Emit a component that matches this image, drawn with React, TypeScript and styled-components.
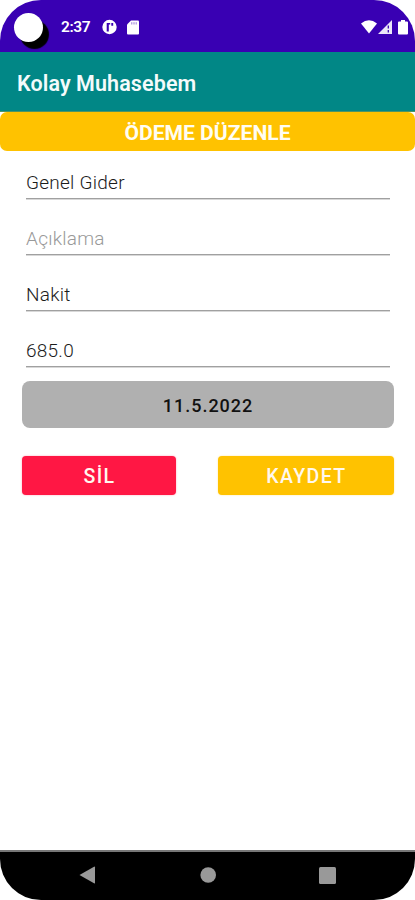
import React from "react";
import styled, { createGlobalStyle } from "styled-components";

const GlobalStyle = createGlobalStyle`
  *, *::before, *::after { box-sizing: border-box; }
  body { margin: 0; background: #fff; font-family: Roboto, "Noto Sans", sans-serif; }
`;

const Device = styled.div`
  width: 415px;
  height: 900px;
  border-radius: 41px;
  overflow: hidden;
  background: #fff;
  display: flex;
  flex-direction: column;
`;

const StatusBar = styled.header`
  height: 52px;
  flex: none;
  background: #3900b3;
  color: #fff;
  display: flex;
  align-items: center;
  padding: 2px 7px 0 14px;
`;

const Camera = styled.div`
  width: 29px;
  height: 29px;
  border-radius: 50%;
  background: #fff;
  box-shadow: 6px 7px 1px #000;
`;

const Clock = styled.span`
  margin-left: 18px;
  width: 41px;
  font-size: 15.5px;
  font-weight: 600;
  letter-spacing: -0.4px;
  line-height: 20px;
`;

const StatusIcon = styled.svg<{ $gap?: number }>`
  display: block;
  flex: none;
  margin-left: ${(p) => p.$gap ?? 0}px;
`;

const Spacer = styled.div`
  flex: 1;
`;

const AppBar = styled.div`
  height: 60px;
  flex: none;
  background: #018786;
  border-bottom: 1px solid #4f9463;
  padding: 3px 17px 0;
  display: flex;
  align-items: center;
`;

const AppTitle = styled.h1`
  margin: 0;
  font-size: 21.5px;
  font-weight: 600;
  letter-spacing: 0.1px;
  color: #f4fbfb;
`;

const Banner = styled.h2`
  margin: 0;
  height: 39px;
  flex: none;
  border-radius: 7px;
  background: #ffc200;
  color: #fffdf3;
  font-size: 21.1px;
  font-weight: 700;
  line-height: 41px;
  text-align: center;
`;

const Form = styled.main`
  flex: 1;
  padding: 0 21px 0 22px;
`;

const Field = styled.input`
  display: block;
  width: calc(100% - 8px);
  height: 56px;
  margin: 0 4px;
  padding: 24px 0 0;
  border: 0;
  border-bottom: 1px solid #a0a0a0;
  box-shadow: 0 1px 0 #d8d8d8;
  border-radius: 0;
  outline: 0;
  background: transparent;
  color: #1c1c1c;
  font: 350 19px Roboto, sans-serif;
  letter-spacing: 0.25px;
  &:first-child { height: 48px; padding-top: 16px; }
  &::placeholder { color: #999; opacity: 1; }
`;

const DateButton = styled.button`
  display: block;
  width: 100%;
  height: 47px;
  margin-top: 14px;
  padding: 1px 0 0;
  border: 0;
  border-radius: 8px;
  background: #b0b0b0;
  color: #111;
  font: 500 18px Roboto, sans-serif;
  letter-spacing: 1px;
`;

const Actions = styled.div`
  display: flex;
  justify-content: space-between;
  margin-top: 28px;
`;

const ActionButton = styled.button<{ $color: string; $width: number }>`
  width: ${(p) => p.$width}px;
  height: 39px;
  padding: 1px 0 0 1px;
  border: 0;
  border-radius: 4px;
  background: ${(p) => p.$color};
  box-shadow: 0 0 2px ${(p) => p.$color}66;
  color: #fff8ef;
  font: 550 19.5px Roboto, sans-serif;
  letter-spacing: 1.4px;
`;

const NavBar = styled.nav`
  height: 50px;
  flex: none;
  background: #000;
  border-top: 2px solid #777;
  display: flex;
  align-items: center;
  justify-content: space-between;
  padding: 0 79px 2px;
`;

export default function App() {
  return (
    <>
      <GlobalStyle />
      <Device>
        <StatusBar>
          <Camera />
          <Clock>2:37</Clock>
          <StatusIcon width="15" height="16" viewBox="0 0 15 16">
            <circle cx="7.5" cy="8" r="7.2" fill="#fff" />
            <path d="M4.7 12.5V4H8.2V5.6H6.8V12.5Z M9.3 4H11.2V6.8H9.3Z" fill="#3900b3" />
          </StatusIcon>
          <StatusIcon $gap={10} width="12" height="15" viewBox="0 0 12 15">
            <path d="M4 .5H11Q12 .5 12 1.5V13.5Q12 14.5 11 14.5H1Q0 14.5 0 13.5V4.5Z" fill="#fff" />
            <path d="M4.8 2.2V4.5M7 2.2V4.5M9.2 2.2V4.5" stroke="#3900b3" strokeWidth=".8" opacity=".65" />
          </StatusIcon>
          <Spacer />
          <StatusIcon width="16" height="14" viewBox="0 0 16 14">
            <path d="M0 3.4Q8-2.8 16 3.4L8 13.6Z" fill="#fff" />
          </StatusIcon>
          <StatusIcon $gap={1} width="14" height="14" viewBox="0 0 14 14">
            <path d="M0 14L14 0V14Z" fill="#fff" opacity=".9" />
            <path d="M10.3 5.5V8.5M10.3 10V12.5" fill="none" stroke="#3900b3" strokeWidth="1.3" />
          </StatusIcon>
          <StatusIcon $gap={6} width="10" height="15" viewBox="0 0 10 15">
            <path d="M3 0H7V1.6H9Q10 1.6 10 2.6V13.5Q10 14.5 9 14.5H1Q0 14.5 0 13.5V2.6Q0 1.6 1 1.6H3Z" fill="#fff" />
          </StatusIcon>
        </StatusBar>
        <AppBar>
          <AppTitle>Kolay Muhasebem</AppTitle>
        </AppBar>
        <Banner>ÖDEME DÜZENLE</Banner>
        <Form>
          <Field defaultValue="Genel Gider" />
          <Field placeholder="Açıklama" />
          <Field defaultValue="Nakit" />
          <Field defaultValue="685.0" />
          <DateButton>11.5.2022</DateButton>
          <Actions>
            <ActionButton $color="#ff1744" $width={154}>SİL</ActionButton>
            <ActionButton $color="#ffc200" $width={176}>KAYDET</ActionButton>
          </Actions>
        </Form>
        <NavBar>
          <svg width="17" height="18" viewBox="0 0 17 18">
            <path d="M.5 9L15 .8Q16 .3 16 1.2V16.8Q16 17.7 15 17.2Z" fill="#999" />
          </svg>
          <svg width="16" height="16" viewBox="0 0 16 16">
            <circle cx="8.2" cy="8" r="7.8" fill="#999" />
          </svg>
          <svg width="17" height="17" viewBox="0 0 17 17">
            <rect width="17" height="17" rx="1.5" fill="#999" />
          </svg>
        </NavBar>
      </Device>
    </>
  );
}
